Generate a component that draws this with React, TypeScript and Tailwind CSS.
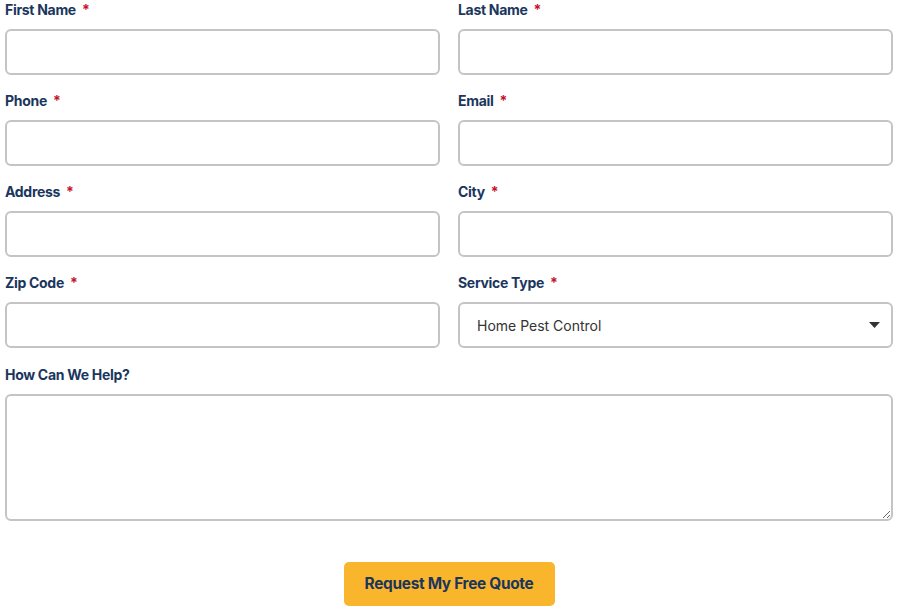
import type { ReactNode } from "react";

const font = { fontFamily: "Inter, 'Liberation Sans', sans-serif" };

function Label({ children, required }: { children: ReactNode; required?: boolean }) {
  return (
    <label className="block h-[18px] mb-[10px] text-[14px] leading-[18px] font-bold text-[#1b365d] tracking-[-0.3px]">
      {children}
      {required && <span className="ml-[6px] text-[#c8102e]">*</span>}
    </label>
  );
}

const inputCls =
  "block w-full h-[46px] rounded-[6px] border-2 border-[#c4c4c4] bg-white px-4 text-[14px] text-[#333] outline-none";

function Field({ label }: { label: string }) {
  return (
    <div>
      <Label required>{label}</Label>
      <input type="text" className={inputCls} />
    </div>
  );
}

export default function App() {
  return (
    <div className="w-[900px] h-[611px] bg-white overflow-hidden" style={font}>
      <form className="pl-[5px] pt-[1px] w-[893px]" onSubmit={(e) => e.preventDefault()}>
        <div className="grid grid-cols-2 gap-x-[18px] gap-y-[17px]">
          <Field label="First Name" />
          <Field label="Last Name" />
          <Field label="Phone" />
          <Field label="Email" />
          <Field label="Address" />
          <Field label="City" />
          <Field label="Zip Code" />
          <div>
            <Label required>Service Type</Label>
            <div className="relative">
              <select
                defaultValue="Home Pest Control"
                className={inputCls + " appearance-none pl-[17px] text-[13.6px] text-[#3a3a3a]"}
              >
                <option>Home Pest Control</option>
                <option>Commercial Pest Control</option>
                <option>Termite Control</option>
              </select>
              <svg
                className="absolute right-[13px] top-[20px] pointer-events-none"
                width="11"
                height="6"
                viewBox="0 0 11 6"
              >
                <path d="M0 0h11L5.5 6z" fill="#333" />
              </svg>
            </div>
          </div>
          <div className="col-span-2 pt-[1px]">
            <Label>How Can We Help?</Label>
            <textarea className="block w-full h-[127px] rounded-[6px] border-2 border-[#c4c4c4] bg-white px-4 py-3 text-[14px] outline-none resize-y" />
          </div>
        </div>
        <div className="flex justify-center mt-[41px]">
          <button
            type="submit"
            className="w-[211px] h-[44px] rounded-[5px] bg-[#f9b52b] text-[#1b365d] text-[15.4px] font-bold tracking-[-0.3px]"
          >
            Request My Free Quote
          </button>
        </div>
      </form>
    </div>
  );
}
